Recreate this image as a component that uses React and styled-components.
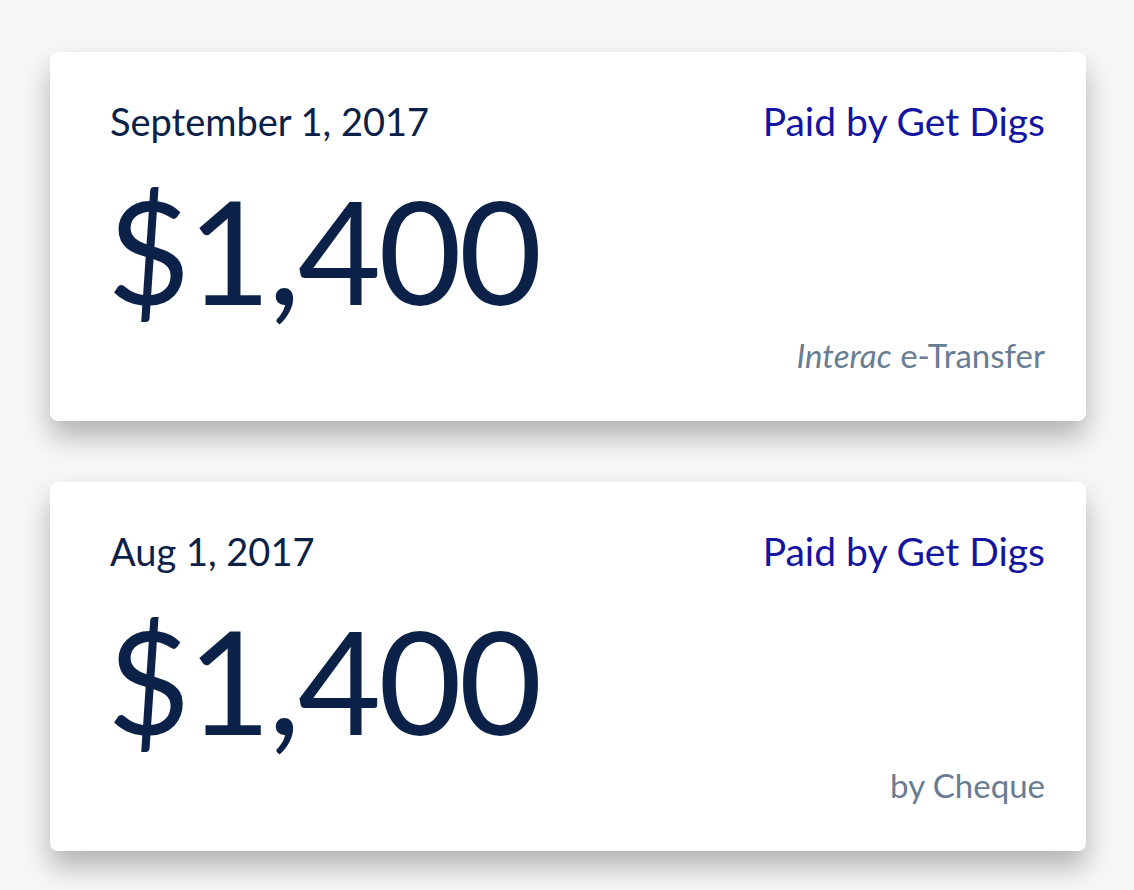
import React from 'react'
import styled, { createGlobalStyle } from 'styled-components'

const GlobalStyle = createGlobalStyle`
  html, body {
    margin: 0;
    padding: 0;
    background: #f7f7f7;
    font-family: Lato, "Open Sans", sans-serif;
  }
`

const payments = [
  { date: 'September 1, 2017', amount: '$1,400', payer: 'Paid by Get Digs', method: 'interac' },
  { date: 'Aug 1, 2017', amount: '$1,400', payer: 'Paid by Get Digs', method: 'cheque' },
]

const PaymentCard = ({ date, amount, payer, method }) => {
  return (
    <Card>
      <CardHeader>
        <DateLabel>{date}</DateLabel>
        <Payer>{payer}</Payer>
      </CardHeader>
      <Amount>{amount}</Amount>
      <Method>
        {method === 'interac'
          ? <><em>Interac</em> e-Transfer</>
          : 'by Cheque'}
      </Method>
    </Card>
  )
}

const App = () => (
  <Page>
    <GlobalStyle />
    {payments.map((p, i) => (
      <PaymentCard key={`payment${i}`} {...p} />
    ))}
  </Page>
)

export default App

const Page = styled.div`
  display: flex;
  flex-direction: column;
  gap: 61px;
  padding: 52px 48px 40px 50px;
`

const Card = styled.section`
  width: 1036px;
  height: 369px;
  box-sizing: border-box;
  background: #fff;
  border-radius: 8px;
  box-shadow: 0 16px 28px rgba(0, 0, 0, 0.28);
  padding: 47px 41px 0 60px;
  display: flex;
  flex-direction: column;
`

const CardHeader = styled.div`
  display: flex;
  justify-content: space-between;
  align-items: baseline;
`

const DateLabel = styled.div`
  font-size: 38px;
  line-height: 44px;
  color: #0b2148;
`

const Payer = styled.div`
  font-size: 39px;
  line-height: 44px;
  color: #1414a0;
`

const Amount = styled.div`
  margin-top: 27px;
  font-size: 144px;
  line-height: 160px;
  color: #0b2148;
  margin-left: -3px;
  letter-spacing: -3px;
`

const Method = styled.div`
  margin-top: 7px;
  text-align: right;
  font-size: 33px;
  line-height: 36px;
  color: #687d92;

  em {
    font-style: italic;
  }
`
